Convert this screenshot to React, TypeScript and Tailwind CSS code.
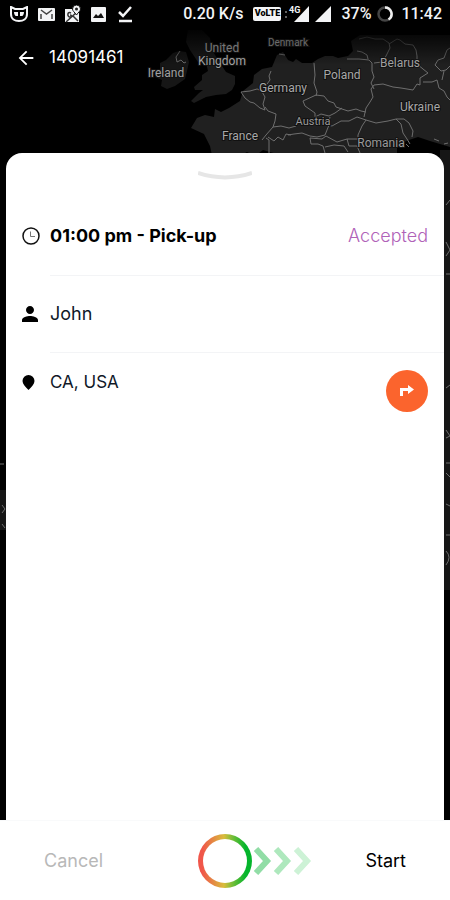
import { MdArrowBack, MdPerson } from "react-icons/md";

const countries = [
  { name: "Ireland", x: 166, y: 77, fill: "#a0a0a0" },
  { name: "United", x: 222, y: 52, fill: "#777777" },
  { name: "Kingdom", x: 222, y: 65, fill: "#a0a0a0" },
  { name: "Denmark", x: 288, y: 46, fill: "#6b6b6b", size: 10 },
  { name: "Germany", x: 283, y: 92, fill: "#a8a8a8" },
  { name: "Poland", x: 342, y: 79, fill: "#a8a8a8" },
  { name: "Belarus", x: 400, y: 67, fill: "#a0a0a0" },
  { name: "Ukraine", x: 420, y: 111, fill: "#a8a8a8" },
  { name: "France", x: 240, y: 140, fill: "#a8a8a8" },
  { name: "Austria", x: 313, y: 125, fill: "#999999", size: 11 },
  { name: "Romania", x: 381, y: 147, fill: "#999999" },
];

const borders = [
  // Ireland and the low countries
  "M180 51l-4 6 1 5 4-2 3 3 2-1M279 54l6 1M271 71l-2 5 1 4-3 4-6 4-2 3M241 92l9-1 7-2 4 1 4 7-2 7 2 6-5-2-6-5-4-1-5-4zM265 107l3 4 8 3-1 7-2 6",
  // France and Switzerland
  "M273 127l8-1 8 2 7-2M273 127l-7 8-4 5M266 138l3 2 0 13M268 137l6 4 4-4 5 3 3-6 5 1",
  // Poland and the Baltic
  "M314 63l1 12-1 8 3 9-1 4M316 95l8 1 4 5 6 2 2 4 6 2M347 59l12 0 10 1 3 3 0 8 2 6-3 6 3 6M357 51l5 1 5 3 1 4M359 39l8-2 8 2 8 0 6 4 1 5-4 8-4 6-8 1M389 44l8-5 3 1 5 4 8 1 3 5 1 6 0 8 6 5 5 4-8 5 0 7-3-1-4 6-12-2-8-1-10-3-9 1-3 4 2 8-3 5-4 6-2 9",
  // Czechia, Slovakia and Austria
  "M316 95l-13 6 2 5 10 7 0 4 6-3 8 2 6-3 7-5M342 109l6 2 8-2 5 2 5 1M366 120l-9-3-8 4-8 0-9 5-4-1 2-8M329 125l-4 10-8 2-7-1-8-3-8 1-6 1",
  // Balkans
  "M366 120l-4 6-4 9 0 4-11 0-10 3-11-6M366 120l10 3 12-2 8-2 5 5 2 9 4 6 3 5M396 119l8 0 5 4 4 8-1 6M326 136l-4 3-12-1 1 6 7 0 5 2 2 7M325 147l9-2 10 1 4 6M347 139l2 7 8 0 3 7M409 147l-3-3",
  // eastern edge
  "M423 82l9 0 5-2 2 8 5 3 3 6 3 3M435 65l3-5 6-2 3-8 3-2M435 65l6 6 5-1 4-4M442 80l2-9M434 139l5 2M444 144l4-1",
  // slivers beside the sheet
  "M446 205l4-5M446 242l4 8-4 6M446 274l4 0M446 388l4-3M446 430l4 6-4 2M446 463l4 0M446 473l4 4M446 504l4 2M446 535l4 0M446 551q6 6 0 14M0 464l4 0M2 505l3 4-3 4M2 524l3 4",
];

function MapBackground() {
  return (
    <svg
      className="absolute inset-0 h-full w-full"
      viewBox="0 0 450 900"
      preserveAspectRatio="xMidYMin slice"
      aria-label="Map of Europe"
    >
      <defs>
        <linearGradient id="shade" x1="0" y1="0" x2="0" y2="1">
          <stop offset="0.4" stopColor="#000" />
          <stop offset="1" stopColor="#000" stopOpacity="0" />
        </linearGradient>
      </defs>
      <rect width="450" height="900" fill="#000" />
      <g fill="#202020">
        <path d="M188 30l14 0 8 8 2 12 8 13 6 9 9 4 0 8-3 6-6 4-10 1-10 2-12 6-3-2 8-8 4-3-8 0-1-3 8-7 0-5 6-4-2-8-8-1-8-12-4-8z" fillOpacity="0.85" />
        <path d="M160 63l6-3 7-7 6-2 7 1 3 10-2 9-2 8-10 7-8 3-6-3 1-6-7-3 5-7z" fillOpacity="0.7" />
        <path d="M197 118l8-3 9 2 1-8 6 3 8-4 11-7 3-10 10-8 1-8 8-6 10-2 5-12 6-3 5 8 5 2 3-3 6 4 10 0 6-4 7-3 8 0 5 2 10-2 5-5-2-10 9-6h90v112l-20-6-12-4-12 4-9 7v24h-110l-10-18-14-4-8 6-8-4-12 6-22 2-3-14-6-12-13-6z" />
        <path d="M440 150h10v440h-10zM0 490h6v40H0z" fillOpacity="0.7" />
      </g>
      <g fill="none" stroke="#6e6e6e" strokeLinejoin="round">
        {borders.map((d) => (
          <path key={d} d={d} />
        ))}
      </g>
      <rect width="450" height="65" fill="url(#shade)" />
      <g textAnchor="middle" fontFamily="Roboto, sans-serif" stroke="#111111" strokeWidth="2" paintOrder="stroke">
        {countries.map((c) => (
          <text key={c.name} x={c.x} y={c.y} fill={c.fill} fontSize={c.size ?? 12}>
            {c.name}
          </text>
        ))}
      </g>
    </svg>
  );
}

function StatusBar() {
  return (
    <div className="flex h-7 items-center justify-between px-2.5 pr-2 font-[Roboto,sans-serif] text-base font-medium text-gray-100">
      <div className="flex items-center gap-2.5">
        <svg width="18" height="16" viewBox="0 0 18 16" aria-hidden="true">
          <path d="M1 1l4 2h8l4-2v7c0 5-4 7-8 7s-8-2-8-7z" fill="none" stroke="currentColor" strokeWidth="2" />
          <path d="M4 6h4v4H6c-1 0-2-2-2-4zM14 6h-4v4h2c1 0 2-2 2-4z" fill="currentColor" />
        </svg>
        <svg width="17" height="13" viewBox="0 0 17 13" aria-hidden="true">
          <rect width="17" height="13" rx="1" fill="currentColor" />
          <path d="M3 2l5.500 4L14 2M3 11V6M14 11V6" fill="none" stroke="#444" strokeWidth="1.500" />
        </svg>
        <svg width="16" height="18" viewBox="0 0 16 18" aria-hidden="true">
          <path d="M0 4h14v13H0z" fill="currentColor" />
          <path d="M1 17L12 7M8 11l5 5M6 8c-4-2-4 4-1 4 2 0 2-2 0-2" fill="none" stroke="#333" strokeWidth="1.500" />
          <path d="M11.500 0a4 4 0 0 1 4 4c0 2-2 3-4 6-2-3-4-4-4-6a4 4 0 0 1 4-4z" fill="currentColor" stroke="#111" />
          <circle cx="11.500" cy="4" r="1.500" fill="#222" />
        </svg>
        <svg width="15" height="15" viewBox="0 0 15 15" aria-hidden="true">
          <rect width="15" height="15" rx="1" fill="currentColor" />
          <path d="M2 11l3-4 2 2 3-3 3 5z" fill="#111" />
        </svg>
        <svg className="ml-0.5" width="15" height="17" viewBox="0 0 15 17" fill="none" stroke="currentColor" strokeWidth="2.500" aria-hidden="true">
          <path d="M1 6l4 4 8-9M1 15h13" />
        </svg>
      </div>
      <div className="flex items-center gap-2.5">
        <span>0.20 K/s</span>
        <span className="flex h-3.5 w-7 items-center justify-center rounded-xs bg-gray-100 text-[9px] font-black text-black">
          VoLTE
        </span>
        <svg className="-ml-1.5" width="46" height="18" viewBox="0 0 46 18" fill="currentColor" aria-hidden="true">
          <path d="M0 6h2v2H0zM0 11h2v2H0z" fillOpacity="0.4" />
          <path d="M24 1v16H9zM46 1v16H30z" />
          <text x="4" y="8" fontFamily="Roboto, sans-serif" fontSize="9" fontWeight="700" stroke="#000" strokeWidth="2" paintOrder="stroke">
            4G
          </text>
        </svg>
        <span>37%</span>
        <svg className="-ml-1" width="16" height="16" viewBox="0 0 16 16" fill="none" strokeWidth="2.500" aria-hidden="true">
          <circle cx="8" cy="8" r="6.500" stroke="#444" />
          <path d="M8 1.500A6.500 6.500 0 0 1 11.500 13.500" stroke="#eee" />
        </svg>
        <span className="-ml-0.5">11:42</span>
      </div>
    </div>
  );
}

function ClockIcon() {
  return (
    <svg width="18" height="18" viewBox="0 0 18 18" fill="none" stroke="#111" aria-hidden="true">
      <circle cx="9" cy="9" r="8" strokeWidth="1.500" />
      <path d="M8.500 4.500v5h4.500" stroke="#777" />
    </svg>
  );
}

function PinIcon() {
  return (
    <svg width="13" height="15" viewBox="0 0 13 15" aria-hidden="true">
      <path d="M6.500 0A6 6 0 0 1 12.500 6c0 3-3 6-6 9-3-3-6-6-6-9a6 6 0 0 1 6-6z" />
    </svg>
  );
}

function SwipeArrows() {
  return (
    <svg width="60" height="28" viewBox="0 0 60 28" fill="none" strokeWidth="6" aria-hidden="true">
      <path d="M4 2l11 12L4 26" stroke="#91dda6" />
      <path d="M24 2l11 12-11 12" stroke="#aee8bd" />
      <path d="M44 2l11 12-11 12" stroke="#cdf2d6" />
    </svg>
  );
}

export default function App() {
  return (
    <div className="relative isolate flex min-h-screen flex-col bg-black font-[Inter,sans-serif]">
      <div className="absolute inset-0 -z-10 overflow-hidden">
        <MapBackground />
      </div>
      <StatusBar />
      <header className="flex h-[60px] items-center gap-3 px-[15px] text-white">
        <button type="button" aria-label="Back">
          <MdArrowBack className="h-[22px] w-[22px] stroke-current" />
        </button>
        <h1 className="text-[17px]">14091461</h1>
      </header>

      <main className="mx-1.5 mt-[65px] flex-1 rounded-t-2xl bg-white text-lg leading-6 text-gray-900">
        <div className="flex h-11 items-center justify-center">
          <svg width="54" height="9" viewBox="0 0 54 9" fill="none" stroke="#e6e6e6" strokeWidth="4" aria-hidden="true">
            <path d="M0 2q27 9 54 0" />
          </svg>
        </div>
        <div className="flex h-[78px] items-center gap-2 px-4">
          <div className="flex w-5 justify-start">
            <ClockIcon />
          </div>
          <h2 className="flex-1 font-bold text-black">01:00 pm - Pick-up</h2>
          <span className="font-light text-[#b062b8]">Accepted</span>
        </div>
        <div className="flex h-[78px] items-center gap-2 pl-4">
          <MdPerson className="-ml-1 h-6 w-6 text-black" aria-hidden="true" />
          <span className="flex h-full flex-1 items-center border-y border-gray-100">John</span>
        </div>
        <div className="flex items-start gap-2 px-4 pt-[17px]">
          <div className="flex h-6 w-5 items-center">
            <PinIcon />
          </div>
          <span className="flex-1 text-[17px]">CA, USA</span>
          <button type="button" aria-label="Directions" className="flex h-[42px] w-[42px] items-center justify-center rounded-full bg-[#fb642d]">
            <svg width="14" height="12" viewBox="0 0 14 12" fill="#fff" aria-hidden="true">
              <path d="M0 11V3h8V0l6 4.500L8 9V6H3v5z" />
            </svg>
          </button>
        </div>
      </main>

      <footer className="grid h-20 grid-cols-[1fr_auto_1fr] items-center border-t border-gray-50 bg-white text-lg">
        <button type="button" className="justify-self-start pl-11 text-[#b8b8b8]">
          Cancel
        </button>
        <button
          type="button"
          aria-label="Swipe right to start"
          className="h-[54px] w-[54px] rounded-full bg-[linear-gradient(90deg,#f0564a_8%,#d9bc3c_48%,#6fbd38_65%,#05b52c_88%)] p-[5px]"
        >
          <span className="block h-full w-full rounded-full bg-white" />
        </button>
        <div className="flex items-center justify-between pr-11">
          <SwipeArrows />
          <button type="button" className="text-black">
            Start
          </button>
        </div>
      </footer>
    </div>
  );
}
